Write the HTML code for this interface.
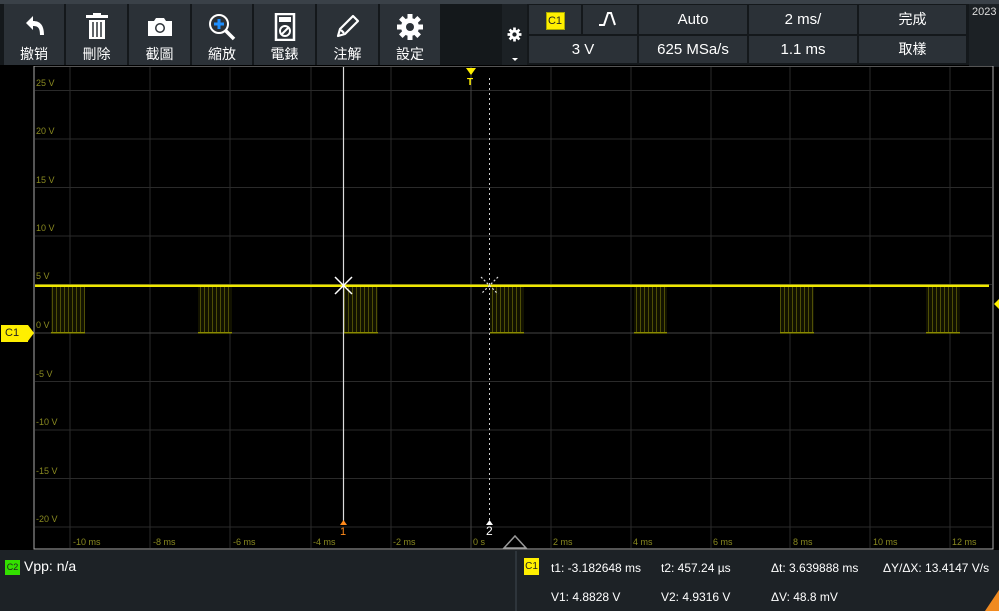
<!DOCTYPE html><html><head><meta charset="utf-8"><style>
body{margin:0;width:999px;height:611px;background:#000;overflow:hidden;font-family:"Liberation Sans","Noto Sans CJK TC",sans-serif;position:relative}
.a{position:absolute}
.tb{top:4px;height:61px;background:#2b3137;color:#fff;text-align:center;font-size:14px}
.tb span{position:absolute;left:0;right:0;top:40px}
.tb svg{position:absolute;left:50%;top:9px;transform:translateX(-50%)}
.c{background:#2b3137;color:#fff;font-size:15px;text-align:center;line-height:29px;position:absolute}
.m{color:#fff;font-size:12px;position:absolute}
</style></head><body>
<div class="a" style="left:0;top:0;width:999px;height:4px;background:#3a4148"></div>
<div class="a" style="left:0;top:4px;width:502px;height:61px;background:#14181b"></div>
<div class="a tb" style="left:4px;width:60px"><svg width="26" height="26" viewBox="0 0 26 26"><path d="M5 10 L12 3 V8 C19 8 23 12 23 22 L19 22 C19 15 17 13 12 13 V17 Z" fill="#fff"/></svg><span>撤销</span></div>
<div class="a tb" style="left:66px;width:61px"><svg width="26" height="28" viewBox="0 0 26 28"><rect x="2" y="2" width="22" height="3" fill="#fff"/><rect x="9" y="0" width="8" height="3" fill="#fff"/><rect x="5" y="7" width="16" height="19" fill="#fff"/><path d="M9 9v15M13 9v15M17 9v15" stroke="#2b3137" stroke-width="1.5"/></svg><span>刪除</span></div>
<div class="a tb" style="left:129px;width:61px"><svg width="26" height="26" viewBox="0 0 26 26"><path d="M1 8h6l2-3h8l2 3h6v15H1z" fill="#fff"/><circle cx="13" cy="15" r="5" fill="#2b3137"/><circle cx="13" cy="15" r="3.5" fill="#fff"/></svg><span>截圖</span></div>
<div class="a tb" style="left:192px;width:60px"><svg width="28" height="28" viewBox="0 0 28 28"><circle cx="11" cy="11" r="9" fill="none" stroke="#fff" stroke-width="2"/><path d="M17 17l9 9" stroke="#fff" stroke-width="3.5"/><path d="M11 6v10M6 11h10" stroke="#1e8fff" stroke-width="3"/></svg><span>縮放</span></div>
<div class="a tb" style="left:254px;width:61px"><svg width="22" height="28" viewBox="0 0 22 28"><rect x="2" y="1" width="18" height="26" fill="none" stroke="#fff" stroke-width="2.5"/><rect x="5" y="4" width="12" height="5" fill="#fff"/><circle cx="11" cy="18" r="5" fill="none" stroke="#fff" stroke-width="2"/><path d="M7 22l8-8" stroke="#fff" stroke-width="2"/></svg><span>電錶</span></div>
<div class="a tb" style="left:317px;width:61px"><svg width="26" height="26" viewBox="0 0 26 26"><path d="M3 23l2-7 13-13 5 5-13 13z M6 17l3 3" fill="none" stroke="#fff" stroke-width="2.2" stroke-linejoin="round"/></svg><span>注解</span></div>
<div class="a tb" style="left:380px;width:60px"><svg width="28" height="28" viewBox="0 0 28 28"><g fill="#fff"><circle cx="14" cy="14" r="9"/><g stroke="#fff" stroke-width="5"><path d="M14 1v26M1 14h26M4.8 4.8l18.4 18.4M23.2 4.8L4.8 23.2"/></g></g><circle cx="14" cy="14" r="4" fill="#2b3137"/></svg><span>設定</span></div>
<div class="a" style="left:502px;top:4px;width:25px;height:61px;background:#1c2125"></div>
<svg class="a" style="left:507px;top:27px" width="15" height="15" viewBox="0 0 28 28"><circle cx="14" cy="14" r="9" fill="#fff"/><path d="M14 1v26M1 14h26M4.8 4.8l18.4 18.4M23.2 4.8L4.8 23.2" stroke="#fff" stroke-width="5"/><circle cx="14" cy="14" r="4" fill="#1c2125"/></svg>
<div class="a" style="left:512px;top:58px;border:3px solid transparent;border-top:3px solid #fff"></div>
<div class="a" style="left:527px;top:4px;width:442px;height:61px;background:#14181b"></div>
<div class="c" style="left:529px;top:5px;width:52px;height:29px"><span style="display:inline-block;background:#ffef00;color:#222;font-size:11px;line-height:16px;width:17px;border:1px solid #aa0;margin-top:6px">C1</span></div>
<div class="c" style="left:583px;top:5px;width:54px;height:29px"><svg width="24" height="16" viewBox="0 0 24 16" style="margin-top:6px"><path d="M1 14h5l4-12h3l4 12" fill="none" stroke="#fff" stroke-width="2"/></svg></div>
<div class="c" style="left:639px;top:5px;width:108px;height:29px">Auto</div>
<div class="c" style="left:749px;top:5px;width:108px;height:29px">2 ms/</div>
<div class="c" style="left:859px;top:5px;width:107px;height:29px;font-size:14px">完成</div>
<div class="c" style="left:529px;top:36px;width:108px;height:27px;line-height:27px">3 V</div>
<div class="c" style="left:639px;top:36px;width:108px;height:27px;line-height:27px">625 MSa/s</div>
<div class="c" style="left:749px;top:36px;width:108px;height:27px;line-height:27px">1.1 ms</div>
<div class="c" style="left:859px;top:36px;width:107px;height:27px;line-height:27px;font-size:14px">取樣</div>
<div class="a" style="left:969px;top:4px;width:30px;height:61px;background:#1c2125;color:#ddd;font-size:11px;padding:2px 0 0 3px">2023</div>
<svg class="a" style="left:0;top:66px" width="999" height="484">
<defs><pattern id="p" width="4" height="10" patternUnits="userSpaceOnUse"><rect width="4" height="10" fill="#121200"/><rect width="1" height="10" fill="#4f4f06"/></pattern></defs>
<rect x="34" y="0" width="959" height="483" fill="#000" stroke="#aaa" stroke-width="1"/>
<g stroke="#2a2a2a" stroke-width="1">
<path d="M70 1V482M150 1V482M230 1V482M311 1V482M391 1V482M551 1V482M631 1V482M711 1V482M790 1V482M870 1V482M950 1V482"/>
<path d="M35 24.5H992M35 73H992M35 121.5H992M35 170H992M35 218.5H992M35 315.5H992M35 364H992M35 412.5H992M35 461H992"/>
</g>
<path d="M471 1V482M35 267H992" stroke="#444"/>
<text fill="#8a8a20" font-size="9" font-family="Liberation Sans">
<tspan x="36" y="20">25 V</tspan><tspan x="36" y="68">20 V</tspan><tspan x="36" y="117">15 V</tspan><tspan x="36" y="165">10 V</tspan><tspan x="36" y="213">5 V</tspan><tspan x="36" y="262">0 V</tspan><tspan x="36" y="311">-5 V</tspan><tspan x="36" y="359">-10 V</tspan><tspan x="36" y="408">-15 V</tspan><tspan x="36" y="456">-20 V</tspan>
<tspan x="73" y="479">-10 ms</tspan><tspan x="153" y="479">-8 ms</tspan><tspan x="233" y="479">-6 ms</tspan><tspan x="313" y="479">-4 ms</tspan><tspan x="393" y="479">-2 ms</tspan><tspan x="473" y="479">0 s</tspan><tspan x="553" y="479">2 ms</tspan><tspan x="633" y="479">4 ms</tspan><tspan x="713" y="479">6 ms</tspan><tspan x="793" y="479">8 ms</tspan><tspan x="873" y="479">10 ms</tspan><tspan x="952" y="479">12 ms</tspan>
</text>
<g fill="url(#p)"><rect x="51" y="221" width="34" height="46"/><rect x="198" y="221" width="34" height="46"/><rect x="344" y="221" width="34" height="46"/><rect x="490" y="221" width="34" height="46"/><rect x="634" y="221" width="33" height="46"/><rect x="780" y="221" width="34" height="46"/><rect x="926" y="221" width="34" height="46"/></g>
<g fill="#8a8a00"><rect x="51" y="266" width="34" height="1.5"/><rect x="198" y="266" width="34" height="1.5"/><rect x="344" y="266" width="34" height="1.5"/><rect x="490" y="266" width="34" height="1.5"/><rect x="634" y="266" width="33" height="1.5"/><rect x="780" y="266" width="34" height="1.5"/><rect x="926" y="266" width="34" height="1.5"/></g>
<rect x="35" y="218.5" width="954" height="2.5" fill="#f0e800"/>
<path d="M343.5 1V455" stroke="#ddd" stroke-width="1.2"/>
<path d="M489.5 12V455" stroke="#ccc" stroke-dasharray="2,3"/>
<path d="M335 211l17 17M352 211l-17 17" stroke="#fff" stroke-width="1.5"/>
<path d="M481 211l17 17M498 211l-17 17" stroke="#ddd" stroke-width="1.2" stroke-dasharray="2,2"/>
<path d="M466 2h10l-5 7z" fill="#ffef00"/><text x="467" y="19" fill="#ffef00" font-size="10" font-weight="bold">T</text>
<path d="M340 459h7l-3.5-5z" fill="#ff8a1a"/><text x="340" y="469" fill="#ff8a1a" font-size="11">1</text>
<path d="M486 459h7l-3.5-5z" fill="#fff"/><text x="486" y="469" fill="#fff" font-size="12">2</text>
<path d="M504 482l11-12 11 12z" fill="none" stroke="#999" stroke-width="1.5"/>
<path d="M994 238l5-5v10z" fill="#ffef00"/>
</svg>
<div class="a" style="left:1px;top:325px;width:23px;height:17px;background:#ffef00;color:#222;font-size:11px;line-height:17px;padding-left:4px">C1</div>
<div class="a" style="left:28px;top:325px;border:8.5px solid transparent;border-left:6px solid #ffef00"></div>
<div class="a" style="left:0;top:550px;width:999px;height:61px;background:#1d2226"></div>
<div class="a" style="left:515px;top:551px;width:2px;height:60px;background:#2e353b"></div>
<div class="a" style="left:5px;top:560px;width:15px;height:15px;background:#33e000;font-size:9px;line-height:15px;color:#222;text-align:center">C2</div>
<div class="m" style="left:24px;top:558px;font-size:14px">Vpp: n/a</div>
<div class="a" style="left:524px;top:558px;width:15px;height:17px;background:#ffef00;font-size:10px;line-height:17px;color:#222;text-align:center">C1</div>
<div class="m" style="left:551px;top:561px">t1: -3.182648 ms</div>
<div class="m" style="left:661px;top:561px">t2: 457.24 µs</div>
<div class="m" style="left:771px;top:561px">Δt: 3.639888 ms</div>
<div class="m" style="left:883px;top:561px">ΔY/ΔX: 13.4147 V/s</div>
<div class="m" style="left:551px;top:590px">V1: 4.8828 V</div>
<div class="m" style="left:661px;top:590px">V2: 4.9316 V</div>
<div class="m" style="left:771px;top:590px">ΔV: 48.8 mV</div>
<div class="a" style="left:985px;top:590px;border-bottom:21px solid #f08a20;border-left:14px solid transparent"></div>
</body></html>
